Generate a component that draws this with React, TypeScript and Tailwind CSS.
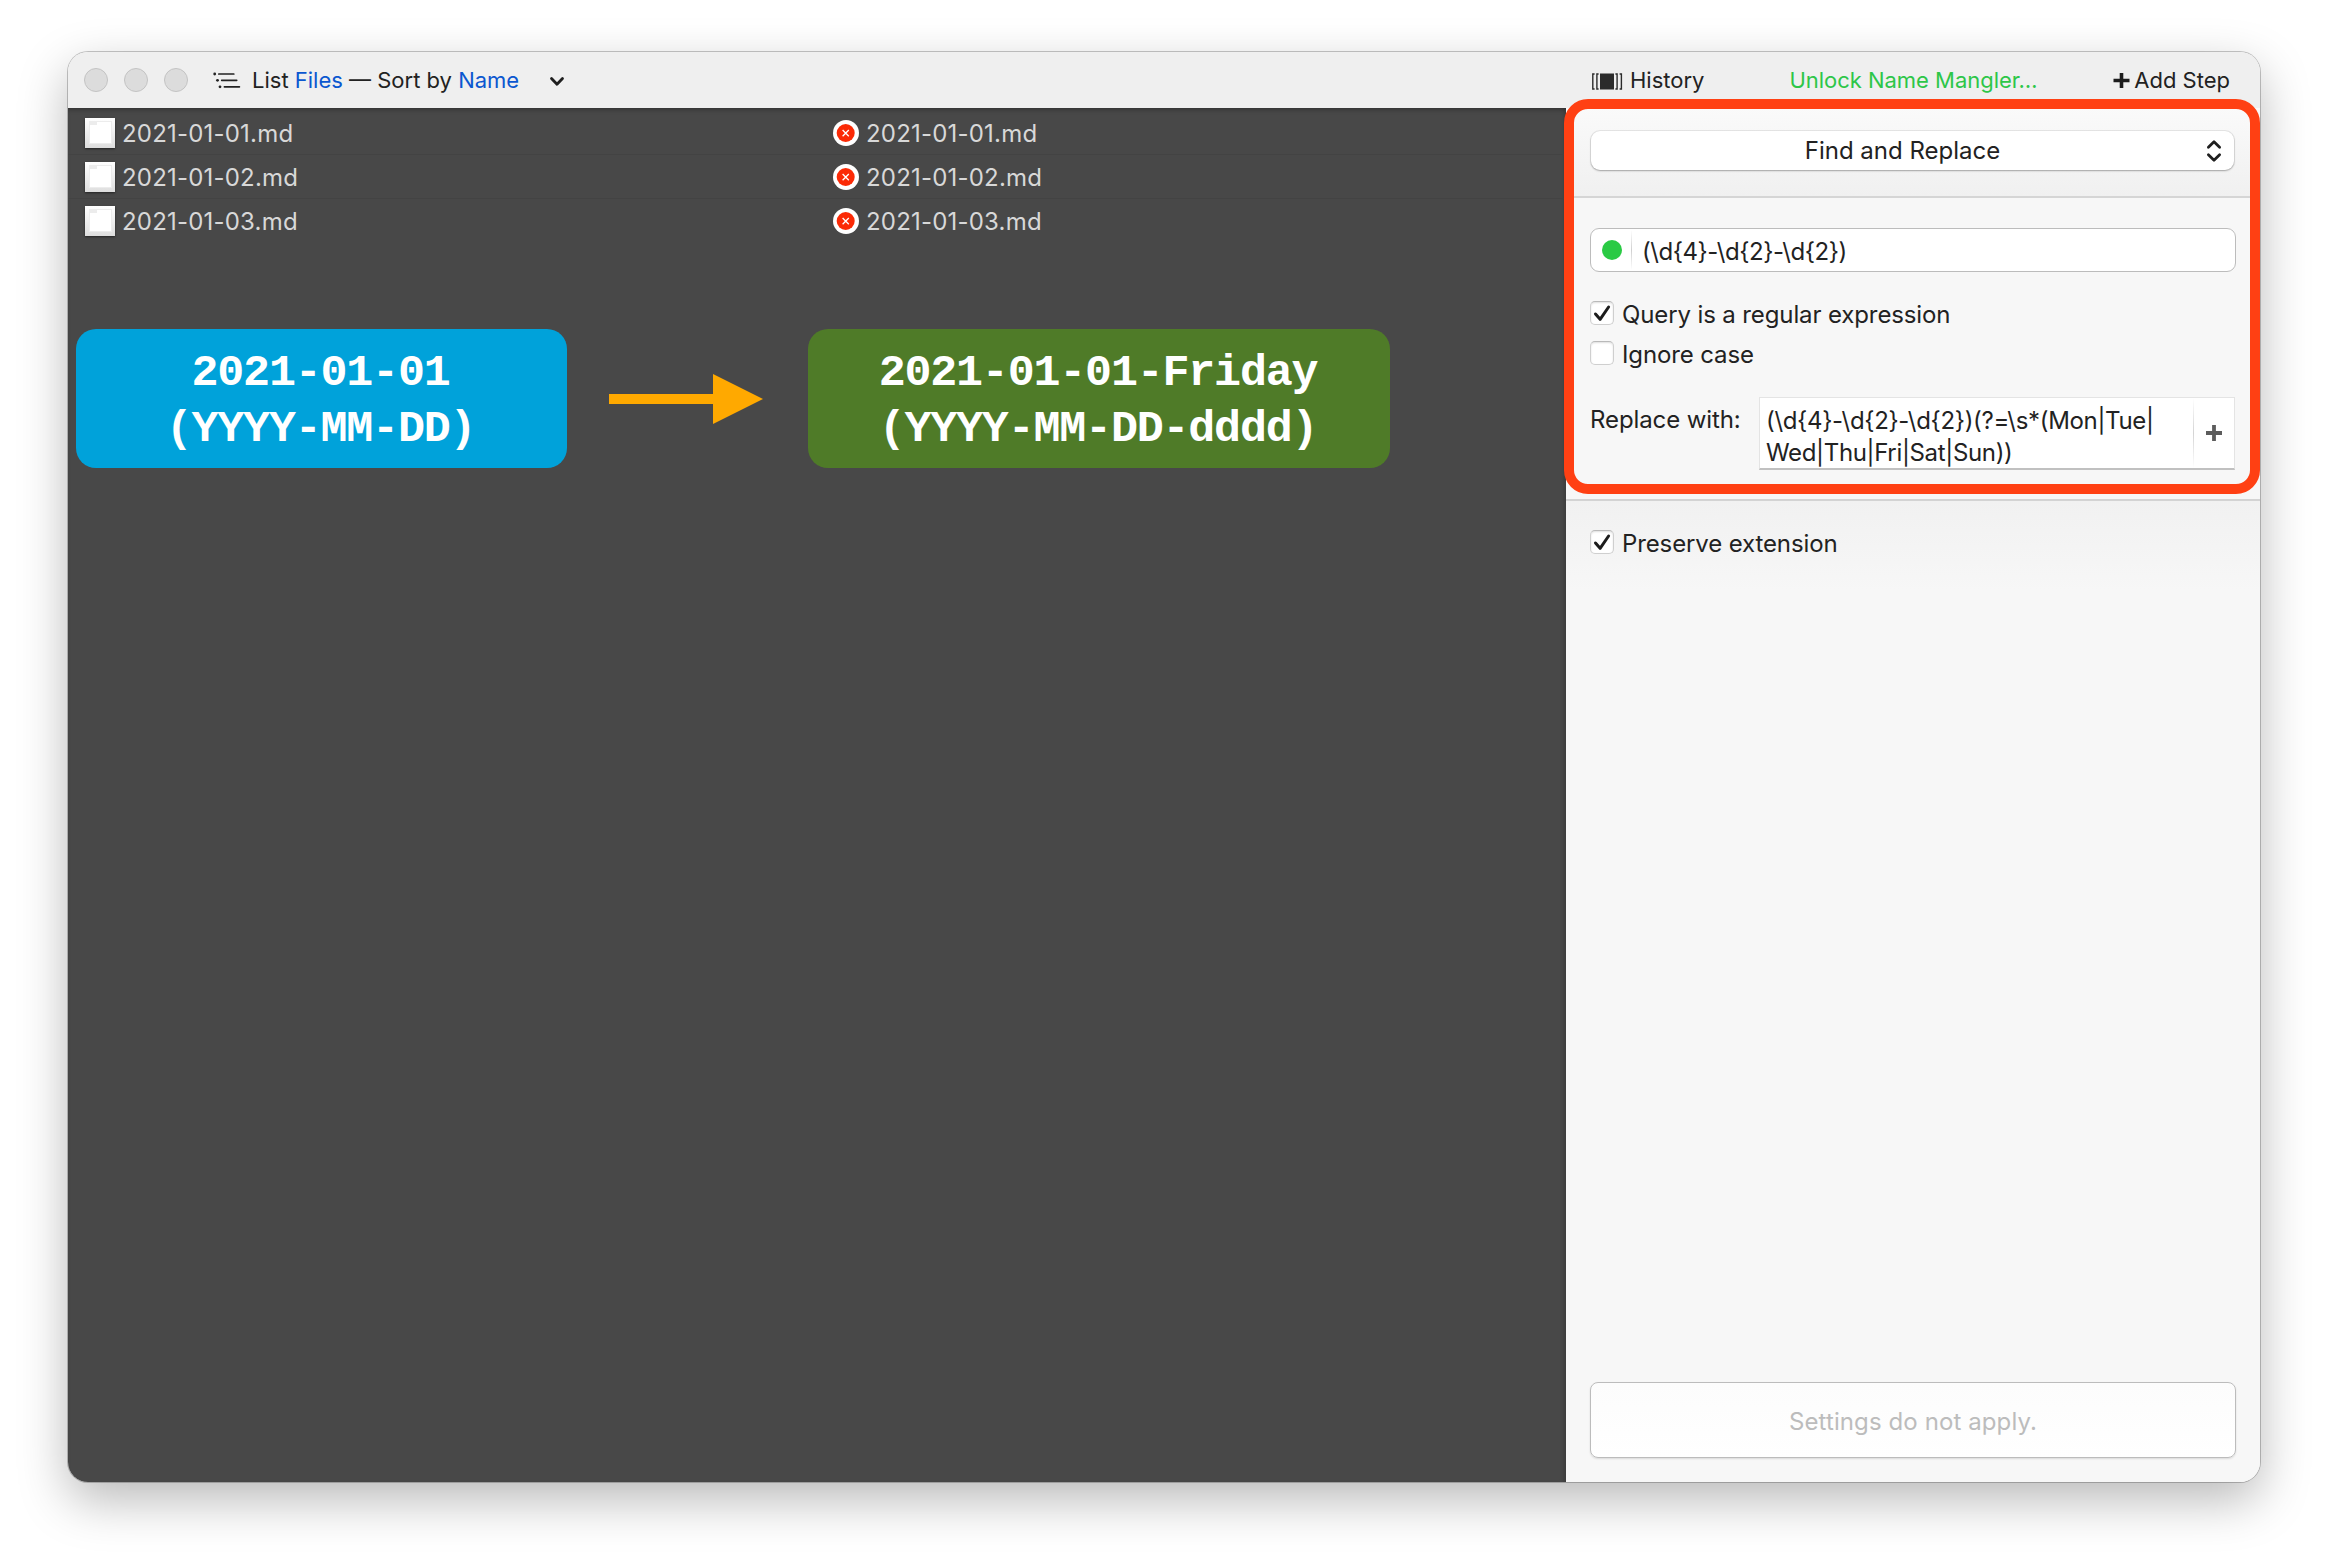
const files = ["2021-01-01.md", "2021-01-02.md", "2021-01-03.md"];

function FileIcon() {
  return (
    <span className="ml-[17px] flex h-[30px] w-[30px] shrink-0 justify-center bg-linear-to-b from-white to-[#dedede] pt-[3px] shadow-[0_1px_2px_rgba(0,0,0,0.5)]">
      <span className="h-[23px] w-[23px] border border-[#ececec] bg-white">
        <span className="block h-[3px] w-[7px] bg-[#ececec]" />
      </span>
    </span>
  );
}

function ErrorIcon() {
  return (
    <svg width="26" height="26" viewBox="0 0 26 26" className="mr-[7px] shrink-0">
      <circle cx="13" cy="13" r="13" fill="#fff" />
      <circle cx="12.7" cy="13" r="9" fill="#fb2a06" />
      <path d="M9.6 10l6.2 6.2M15.8 10l-6.2 6.2" stroke="#fff" strokeWidth="1.3" />
    </svg>
  );
}

function Checkbox({ checked, label }: { checked?: boolean; label: string }) {
  return (
    <label className="ml-6 flex h-8 items-center">
      <span className="mr-2 flex h-6 w-6 shrink-0 items-center justify-center rounded-[5px] border border-[#cfcfcf] border-t-[#b9b9b9] bg-white shadow-[inset_0_1px_2px_rgba(0,0,0,0.13)]">
        {checked && (
          <svg width="22" height="22" viewBox="0 0 22 22" fill="none">
            <path d="M4.5 12l4.6 5.3L17.6 5" stroke="#1c1c1c" strokeWidth="3" strokeLinecap="round" strokeLinejoin="round" />
          </svg>
        )}
      </span>
      <span className="pt-[3px] tracking-[-0.12px]">{label}</span>
    </label>
  );
}

function Toolbar() {
  return (
    <header className="flex h-14 shrink-0 items-center bg-[#efefef] text-[22px] leading-7">
      <div className="flex w-[1498px] items-center">
        <div className="ml-4 flex gap-4">
          <span className="h-6 w-6 rounded-full border border-[#c3c3c3] bg-[#dcdcdc]" />
          <span className="h-6 w-6 rounded-full border border-[#c3c3c3] bg-[#dcdcdc]" />
          <span className="h-6 w-6 rounded-full border border-[#c3c3c3] bg-[#dcdcdc]" />
        </div>
        <svg width="28" height="18" viewBox="0 0 28 18" className="ml-[25px] text-[#222]">
          <g fill="currentColor">
            <circle cx="1.7" cy="3" r="1.4" />
            <circle cx="4.5" cy="9.3" r="1.4" />
            <circle cx="7" cy="15.8" r="1.4" />
          </g>
          <path d="M5.8 3h15M8.7 9.3h15M11.4 15.8h15" stroke="currentColor" strokeWidth="1.7" strokeLinecap="round" />
        </svg>
        <div className="ml-[11px] whitespace-pre">
          List <span className="text-[#0b57d0]">Files</span> — Sort by <span className="text-[#0b57d0]">Name</span>
        </div>
        <svg width="16" height="12" viewBox="0 0 16 12" fill="none" className="ml-[30px] mt-1">
          <path d="M2.5 2.5L8 8.3l5.5-5.8" stroke="#1f1f1f" strokeWidth="2.8" strokeLinecap="round" strokeLinejoin="round" />
        </svg>
      </div>
      <div className="flex flex-1 items-center">
        <svg width="31" height="17" viewBox="0 0 31 17" className="ml-[26px] mt-[2px]" fill="none" stroke="#2b2b2b">
          <rect x="8" y="0.5" width="14" height="16" fill="#2b2b2b" stroke="none" />
          <path d="M2.6 1H.8v15h1.8M6.6 1H4.9v15h1.7M23.4 1h1.7v15h-1.7M27.6 1h1.8v15h-1.8" strokeWidth="1.4" />
        </svg>
        <span className="ml-[7px]">History</span>
        <span className="ml-[85px] tracking-[-0.03px] text-[#2dc648]">Unlock Name Mangler…</span>
        <span className="mr-[30px] ml-auto flex items-center">
          <svg width="17" height="17" viewBox="0 0 17 17" className="mr-1">
            <path d="M8.5 1v15M.5 8.5h16" stroke="#1c1c1c" strokeWidth="3.6" />
          </svg>
          Add Step
        </span>
      </div>
    </header>
  );
}

function FileList() {
  return (
    <main className="w-[1498px] shrink-0 bg-[#484848] pt-[3px] text-[#d8d8d8] shadow-[inset_0_4px_4px_-2px_rgba(0,0,0,0.25),inset_-4px_0_4px_-2px_rgba(0,0,0,0.15)]">
      <ul>
        {files.map((name) => (
          <li key={name} className="flex h-11 items-center border-b border-[#434343] tracking-[0.2px] last:border-transparent">
            <div className="flex w-[765px] items-center">
              <FileIcon />
              <span className="ml-[7px] pt-[3px]">{name}</span>
            </div>
            <div className="flex items-center">
              <ErrorIcon />
              <span className="pt-[3px]">{name}</span>
            </div>
          </li>
        ))}
      </ul>
      <div className="mt-[86px] ml-2 flex items-start text-center font-['Liberation_Mono',monospace] text-[45px] leading-14 font-bold tracking-[-1.2px] text-white">
        <div className="h-[139px] w-[491px] rounded-[20px] bg-[#00a2da] pt-[17px] pr-[2px]">
          2021-01-01
          <br />
          (YYYY-MM-DD)
        </div>
        <svg width="154" height="52" viewBox="0 0 154 52" className="mt-11 ml-[42px]" fill="#ffa900">
          <path d="M0 21h104V1l50 25-50 25V31H0z" />
        </svg>
        <div className="ml-[45px] h-[139px] w-[582px] rounded-[20px] bg-[#4f7b28] pt-[17px] pr-[2px]">
          2021-01-01-Friday
          <br />
          (YYYY-MM-DD-dddd)
        </div>
      </div>
    </main>
  );
}

function Sidebar() {
  return (
    <aside className="flex flex-1 flex-col bg-[#f7f7f7]">
      <section className="h-[90px] shrink-0 border-b-2 border-[#d5d5d5] bg-linear-to-b from-[#fafafa] to-[#f0f0f0] pt-[23px]">
        <div className="ml-[25px] flex h-[39px] w-[643px] items-center rounded-[9px] bg-white pr-3 shadow-[0_0_0_1px_rgba(0,0,0,0.07),0_1px_2px_rgba(0,0,0,0.28)]">
          <span className="flex-1 pl-2 text-center">Find and Replace</span>
          <svg width="16" height="24" viewBox="0 0 16 24" fill="none" stroke="#1f1f1f" strokeWidth="2.8" strokeLinecap="round" strokeLinejoin="round">
            <path d="M2.4 8.3L8 2.8l5.6 5.5M2.4 15.7L8 21.2l5.6-5.5" />
          </svg>
        </div>
      </section>
      <section className="h-[303px] shrink-0 border-b-2 border-[#d3d3d3] pt-[30px]">
        <div className="ml-6 flex h-11 w-[646px] items-center rounded-[9px] border border-[#bcbcbc] bg-white">
          <span className="ml-[11px] h-5 w-5 rounded-full bg-[#2aca44]" />
          <span className="ml-[9px] h-10 w-px bg-linear-to-b from-white via-[#d0d0d0] to-white" />
          <span className="ml-[10px] pt-[3px] tracking-[-0.45px]">{"(\\d{4}-\\d{2}-\\d{2})"}</span>
        </div>
        <div className="mt-[25px] flex flex-col gap-2">
          <Checkbox checked label="Query is a regular expression" />
          <Checkbox label="Ignore case" />
        </div>
        <div className="mt-7 ml-6 flex">
          <span className="w-[169px] pt-[7px] tracking-[-0.1px]">Replace with:</span>
          <div className="flex h-[73px] w-[476px] border border-[#e4e4e4] border-b-2 border-b-[#c0c0c0] bg-white">
            <div className="w-[433px] pt-[7px] pl-[6px] whitespace-nowrap">
              <span className="block tracking-[-0.33px]">{"(\\d{4}-\\d{2}-\\d{2})(?=\\s*(Mon|Tue|"}</span>
              <span className="block tracking-[-0.34px]">Wed|Thu|Fri|Sat|Sun))</span>
            </div>
            <span className="w-px bg-linear-to-b from-white via-[#d4d4d4] to-white" />
            <div className="flex flex-1 items-center justify-center">
              <svg width="16" height="16" viewBox="0 0 16 16">
                <path d="M8 0v16M0 8h16" stroke="#5c5c5c" strokeWidth="3.8" />
              </svg>
            </div>
          </div>
        </div>
      </section>
      <section className="h-[90px] bg-linear-to-b from-[#f1f1f1] to-[#f7f7f7] pt-[25px]">
        <Checkbox checked label="Preserve extension" />
      </section>
      <div className="mt-auto mb-6 ml-6 flex h-[76px] w-[646px] items-center justify-center rounded-[8px] border border-[#bcbcbc] bg-linear-to-b from-[#fcfcfc] to-white pt-1 tracking-[0.1px] text-[#bcbcbc] shadow-[0_1px_2px_rgba(0,0,0,0.12)]">
        Settings do not apply.
      </div>
    </aside>
  );
}

export default function App() {
  return (
    <div className="h-[1566px] w-[2328px] overflow-hidden bg-white pt-[52px] pl-[68px] font-['Inter',sans-serif] text-2xl leading-8 text-[#222]">
      <div className="relative h-[1430px] w-[2192px] rounded-[20px] shadow-[0_0_0_1px_rgba(0,0,0,0.22),0_18px_50px_rgba(0,0,0,0.28)]">
        <div className="flex h-full flex-col overflow-hidden rounded-[20px]">
          <Toolbar />
          <div className="flex flex-1">
            <FileList />
            <Sidebar />
          </div>
        </div>
        <div className="pointer-events-none absolute top-[47px] right-0 h-[395px] w-[696px] rounded-[24px] border-10 border-[#ff4013]" />
      </div>
    </div>
  );
}
